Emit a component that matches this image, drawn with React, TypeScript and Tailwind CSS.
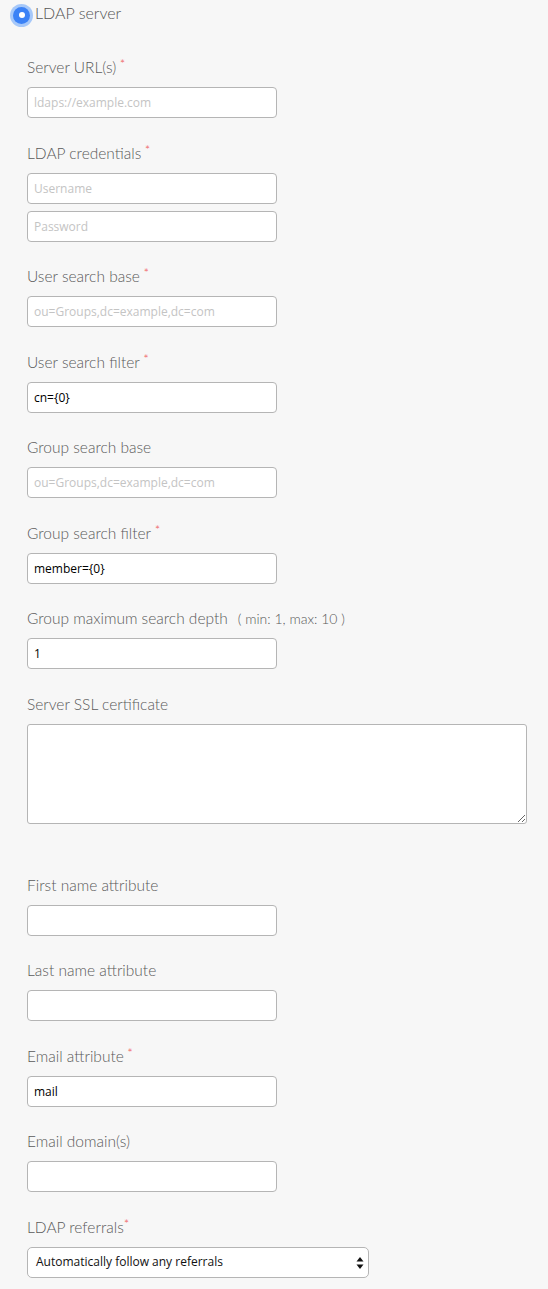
import React from "react";

const labelCls =
  "block h-5 leading-5 mb-[10px] text-[15.5px] font-light text-[#5a5a5a] [font-family:Lato,'Liberation_Sans',sans-serif]";
const inputCls =
  "block box-border w-[250px] h-[31px] rounded-[4px] border border-[#b5b5b5] bg-white px-[6px] text-[12px] text-black placeholder:text-[#c4c4c4] outline-none [font-family:'Open_Sans','Noto_Sans',sans-serif]";

function Req({ space = true }: { space?: boolean }) {
  return (
    <span className="text-[#ef4f4f] text-[13px] relative -top-[4px]">
      {space ? "\u00a0" : ""}*
    </span>
  );
}

function Field({
  label,
  req,
  children,
  extra,
}: {
  label: string;
  req?: boolean;
  children: React.ReactNode;
  extra?: React.ReactNode;
}) {
  return (
    <div className="mb-[24.5px]">
      <label className={labelCls}>
        {label}
        {req && <Req />}
        {extra}
      </label>
      {children}
    </div>
  );
}

export default function App() {
  return (
    <div className="min-h-[1289px] w-[548px] bg-[#f7f7f7] [font-family:Lato,'Liberation_Sans',sans-serif]">
      <div className="flex items-center h-[24px] pt-[3px] box-content">
        <span className="ml-[10px] flex items-center justify-center w-[23px] h-[23px] rounded-full bg-[#a6c8f9]">
          <span className="flex items-center justify-center w-[17px] h-[17px] rounded-full bg-[#3b82f6]">
            <span className="w-[6px] h-[6px] rounded-full bg-white" />
          </span>
        </span>
        <span className="ml-[2px] text-[16px] font-light text-[#555] -mt-[4px]">
          LDAP server
        </span>
      </div>

      <div className="px-[27px] pt-[30px]">
        <Field label="Server URL(s)" req>
          <input className={inputCls} placeholder="ldaps://example.com" />
        </Field>
        <Field label="LDAP credentials" req>
          <input className={inputCls} placeholder="Username" />
          <input className={inputCls + " mt-[7px]"} placeholder="Password" />
        </Field>
        <Field label="User search base" req>
          <input className={inputCls} placeholder="ou=Groups,dc=example,dc=com" />
        </Field>
        <Field label="User search filter" req>
          <input className={inputCls} defaultValue="cn={0}" />
        </Field>
        <Field label="Group search base">
          <input className={inputCls} placeholder="ou=Groups,dc=example,dc=com" />
        </Field>
        <Field label="Group search filter" req>
          <input className={inputCls} defaultValue="member={0}" />
        </Field>
        <Field
          label="Group maximum search depth"
          extra={
            <span className="ml-[10px] text-[14px]">( min: 1, max: 10 )</span>
          }
        >
          <input className={inputCls} defaultValue="1" />
        </Field>
        <div className="mb-[51px]">
          <label className={labelCls}>Server SSL certificate</label>
          <textarea className="block box-border w-[500px] h-[100px] rounded-[3px] border border-[#b5b5b5] bg-white outline-none" />
        </div>
        <Field label="First name attribute">
          <input className={inputCls} />
        </Field>
        <Field label="Last name attribute">
          <input className={inputCls} />
        </Field>
        <Field label="Email attribute" req>
          <input className={inputCls} defaultValue="mail" />
        </Field>
        <Field label="Email domain(s)">
          <input className={inputCls} />
        </Field>
        <div>
          <label className={labelCls}>
            LDAP referrals
            <Req space={false} />
          </label>
          <div className="relative w-[342px] h-[31px] box-border rounded-[5px] border border-[#b5b5b5] bg-white flex items-center">
            <span className="pl-[8px] text-[12px] text-[#111] [font-family:'Open_Sans','Noto_Sans',sans-serif]">
              Automatically follow any referrals
            </span>
            <svg
              className="absolute right-[4px] top-[9px]"
              width="8"
              height="12"
              viewBox="0 0 8 12"
            >
              <path d="M4 0 L7.5 4.5 L0.5 4.5 Z" fill="#111" />
              <path d="M4 12 L7.5 7.5 L0.5 7.5 Z" fill="#111" />
            </svg>
          </div>
        </div>
      </div>
    </div>
  );
}
